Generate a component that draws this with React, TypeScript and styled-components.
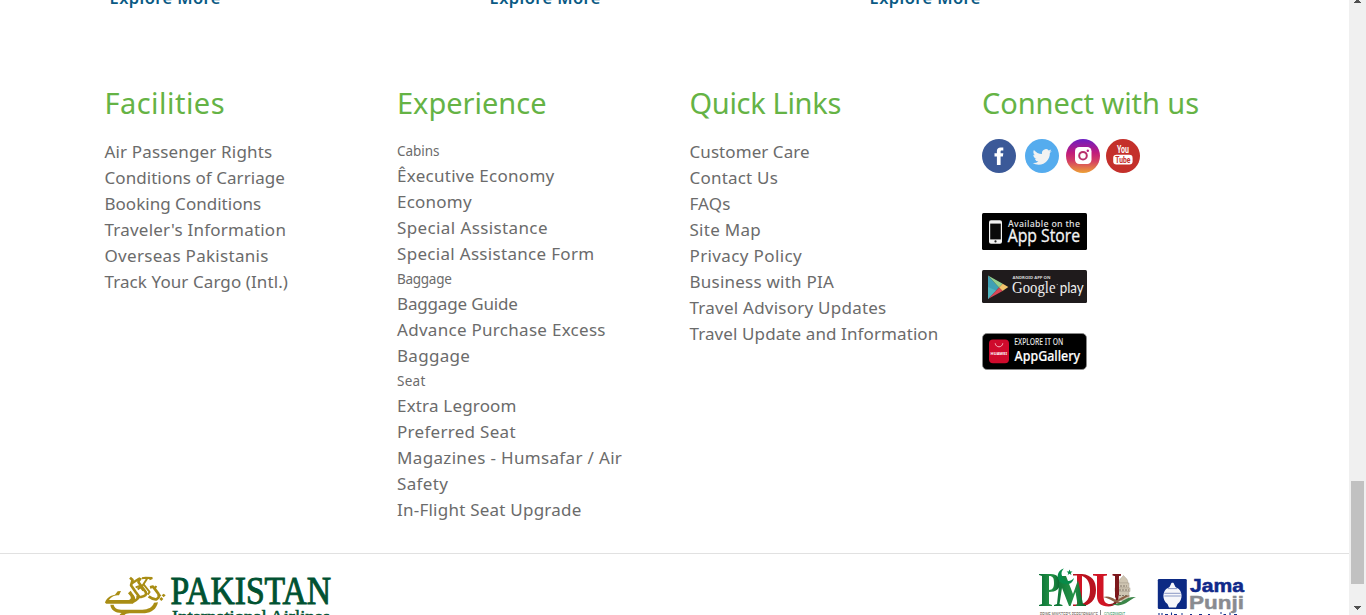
import React from "react";
import styled, { createGlobalStyle } from "styled-components";

const GlobalStyle = createGlobalStyle`
  *, *::before, *::after { box-sizing: border-box; }
  html, body { margin: 0; padding: 0; overflow: hidden; background: #fff; }
  body { font-family: "Noto Sans", "Open Sans", sans-serif; color: #6b6b6b; }
  svg { display: block; }
  ul { list-style: none; margin: 0; padding: 0; }
`;

const Window = styled.div`
  display: flex;
  width: 1366px;
  height: 615px;
  overflow: hidden;
`;

const Page = styled.div`
  flex: 1;
  min-width: 0;
  height: 100%;
  overflow: hidden;
`;

const Offers = styled.div`
  display: flex;
  height: 84px;
  padding-left: 109.5px;
`;

const ExploreLink = styled.a`
  width: 380px;
  margin-top: -14px;
  font-size: 16.5px;
  line-height: 24px;
  font-weight: 600;
  letter-spacing: 0.42px;
  color: #0a5a84;
`;

const FooterGrid = styled.div`
  display: grid;
  grid-template-columns: repeat(4, 292.5px);
  height: 469px;
  padding-left: 89.5px;
`;

const Column = styled.section`
  padding: 0 15px;
`;

const Heading = styled.h3<{ $track?: number }>`
  margin: 0;
  height: 55px;
  font-size: 29px;
  line-height: 38px;
  font-weight: 400;
  white-space: nowrap;
  letter-spacing: ${(p) => p.$track ?? 0}px;
  color: #65b345;
`;

const LinkItem = styled.li<{ $track: number }>`
  font-size: 17px;
  line-height: 26px;
  letter-spacing: ${(p) => p.$track}px;
`;

const GroupLabel = styled.li<{ $track: number }>`
  font-size: 13.5px;
  line-height: 24px;
  letter-spacing: ${(p) => p.$track}px;
`;

const Social = styled.div`
  display: flex;
  height: 74px;
`;

const SocialIcon = styled.a<{ $gap: number }>`
  width: 34px;
  height: 34px;
  margin-right: ${(p) => p.$gap}px;
`;

const Badge = styled.a<{ $height: number; $after: number }>`
  display: block;
  width: 105px;
  height: ${(p) => p.$height}px;
  margin-bottom: ${(p) => p.$after}px;
`;

const Bottom = styled.div`
  display: flex;
  height: 62px;
  border-top: 1px solid #e1e1e1;
  padding-left: 100px;
  overflow: hidden;
`;

const PiaLogo = styled.div`
  width: 935px;
`;

const PmduLogo = styled.div`
  width: 120px;
`;

const Scrollbar = styled.div`
  display: flex;
  flex-direction: column;
  align-items: center;
  justify-content: space-between;
  width: 17px;
  height: 100%;
  background: #f0f0f0;
`;

const Thumb = styled.div`
  width: 13px;
  height: 103px;
  margin: 478px 0 auto 0;
  background: #c1c1c1;
`;

type Entry = { text: string; track: number; label?: boolean };

const facilities: Entry[] = [
  { text: "Air Passenger Rights", track: 0.16 },
  { text: "Conditions of Carriage", track: 0.06 },
  { text: "Booking Conditions", track: 0.02 },
  { text: "Traveler's Information", track: 0.22 },
  { text: "Overseas Pakistanis", track: 0.3 },
  { text: "Track Your Cargo (Intl.)", track: 0.09 },
];

const experience: Entry[] = [
  { text: "Cabins", track: -0.03, label: true },
  { text: "Êxecutive Economy", track: 0.28 },
  { text: "Economy", track: 0.22 },
  { text: "Special Assistance", track: 0.39 },
  { text: "Special Assistance Form", track: 0.31 },
  { text: "Baggage", track: -0.28, label: true },
  { text: "Baggage Guide", track: -0.16 },
  { text: "Advance Purchase Excess Baggage", track: 0.29 },
  { text: "Seat", track: 0.26, label: true },
  { text: "Extra Legroom", track: 0.18 },
  { text: "Preferred Seat", track: 0.29 },
  { text: "Magazines - Humsafar / Air Safety", track: 0.34 },
  { text: "In-Flight Seat Upgrade", track: 0.23 },
];

const quickLinks: Entry[] = [
  { text: "Customer Care", track: 0.07 },
  { text: "Contact Us", track: 0.2 },
  { text: "FAQs", track: 0.14 },
  { text: "Site Map", track: 0.28 },
  { text: "Privacy Policy", track: 0.37 },
  { text: "Business with PIA", track: 0.23 },
  { text: "Travel Advisory Updates", track: 0.24 },
  { text: "Travel Update and Information", track: 0.1 },
];

const LinkList = ({ items }: { items: Entry[] }) => (
  <ul>
    {items.map((item) =>
      item.label ? (
        <GroupLabel key={item.text + "-label"} $track={item.track}>{item.text}</GroupLabel>
      ) : (
        <LinkItem key={item.text} $track={item.track}>{item.text}</LinkItem>
      )
    )}
  </ul>
);

const Facebook = () => (
  <svg width="34" height="34" viewBox="0 0 34 34">
    <circle cx="17" cy="17" r="17" fill="#3b5998" />
    <path fill="#fff" d="M14.9 26V17.6H12.5V14.2H14.9V12C14.9 9.6 16.3 8.4 18.6 8.4H21.3V11.6H19.7C18.9 11.6 18.6 12 18.6 12.7V14.2H21.3L20.9 17.6H18.6V26Z" />
  </svg>
);

const Twitter = () => (
  <svg width="34" height="34" viewBox="0 0 34 34">
    <circle cx="17" cy="17" r="17" fill="#55acee" />
    <path
      fill="#f1f2f2"
      transform="translate(7.6 8.4) scale(0.8)"
      d="M23.95 4.57a10 10 0 0 1-2.82.77 4.96 4.96 0 0 0 2.16-2.72c-.95.55-2 .95-3.13 1.18a4.92 4.92 0 0 0-8.38 4.48C7.69 8.1 4.07 6.13 1.64 3.16a4.82 4.82 0 0 0-.67 2.48c0 1.7.87 3.21 2.19 4.1a4.9 4.9 0 0 1-2.23-.62v.06a4.92 4.92 0 0 0 3.95 4.83 5 5 0 0 1-2.21.08 4.94 4.94 0 0 0 4.6 3.42A9.87 9.87 0 0 1 0 19.54a13.99 13.99 0 0 0 7.55 2.21c9.05 0 14-7.5 14-13.99 0-.21 0-.42-.02-.63a9.94 9.94 0 0 0 2.46-2.55z"
    />
  </svg>
);

const Instagram = () => (
  <svg width="34" height="34" viewBox="0 0 34 34">
    <defs>
      <linearGradient id="insta" x1="0" y1="0" x2="0" y2="1">
        <stop offset="0" stopColor="#6b1fc4" />
        <stop offset="0.4" stopColor="#c01b7c" />
        <stop offset="0.65" stopColor="#d43f63" />
        <stop offset="1" stopColor="#eda136" />
      </linearGradient>
    </defs>
    <circle cx="17" cy="17" r="17" fill="url(#insta)" />
    <rect x="9" y="8" width="16.5" height="17" rx="4.2" fill="#fff" />
    <circle cx="17" cy="16.7" r="3.8" fill="none" stroke="#b8306c" strokeWidth="2" />
    <circle cx="21.8" cy="11.8" r="1.2" fill="#b81d7c" />
  </svg>
);

const Youtube = () => (
  <svg width="34" height="34" viewBox="0 0 34 34">
    <circle cx="17" cy="17" r="17" fill="#c4302b" />
    <text x="11" y="13.8" fontFamily="Roboto, sans-serif" fontWeight="700" fontSize="10" fill="#fff" textLength="12" lengthAdjust="spacingAndGlyphs">You</text>
    <rect x="7.2" y="15.8" width="19.4" height="9.6" rx="3.2" fill="#fff" />
    <text x="9.3" y="23.6" fontFamily="Roboto, sans-serif" fontWeight="700" fontSize="8.4" fill="#c4302b" textLength="15.2" lengthAdjust="spacingAndGlyphs">Tube</text>
  </svg>
);

const AppStore = () => (
  <svg width="105" height="37" viewBox="0 0 105 37">
    <rect width="105" height="37" rx="1.5" fill="#000" />
    <rect x="7" y="7.3" width="13" height="23.4" rx="2" fill="#f2f2f2" />
    <rect x="8.2" y="10.6" width="10.6" height="15.8" fill="#0a0a0a" />
    <circle cx="13.5" cy="28.4" r="1.1" fill="#222" />
    <text x="26" y="14.2" fontFamily="Noto Sans, sans-serif" fontWeight="500" fontSize="8.8" fill="#e4e4e4" textLength="72" lengthAdjust="spacing">Available on the</text>
    <text x="25.7" y="29.4" fontFamily="Open Sans, sans-serif" fontWeight="500" fontSize="18" fill="#f4f4f4" stroke="#f4f4f4" strokeWidth="0.3" textLength="72.5" lengthAdjust="spacingAndGlyphs">App Store</text>
  </svg>
);

const GooglePlay = () => (
  <svg width="105" height="33" viewBox="0 0 105 33">
    <rect width="105" height="33" rx="1.5" fill="#1f1b1c" />
    <path d="M6 5.5V29L17 17.6Z" fill="#3fa0b5" />
    <path d="M6 5.5L17 17.6L20.7 13.8Z" fill="#94cf8e" />
    <path d="M20.7 13.8L26.3 17L20.5 21L17 17.6Z" fill="#f2c46c" />
    <path d="M6 29L17 17.6L20.6 21Z" fill="#d94756" />
    <path d="M6 17V29L14 20.5Z" fill="#4fb6c0" />
    <text x="30.5" y="9" fontFamily="Noto Sans, sans-serif" fontWeight="700" fontSize="4" fill="#d8d8d8" textLength="38" lengthAdjust="spacingAndGlyphs">ANDROID APP ON</text>
    <text x="30" y="22.6" fontFamily="Liberation Serif, serif" fontSize="16.5" fill="#efefef" textLength="43.5" lengthAdjust="spacingAndGlyphs">Google</text>
    <circle cx="75.2" cy="14.5" r="0.6" fill="#aaa" />
    <text x="77.7" y="22.6" fontFamily="Lato, sans-serif" fontSize="16" fill="#efefef" textLength="24" lengthAdjust="spacingAndGlyphs">play</text>
  </svg>
);

const AppGallery = () => (
  <svg width="105" height="37" viewBox="0 0 105 37">
    <rect x="0.5" y="0.5" width="104" height="36" rx="4.5" fill="#000" stroke="#8c8c8c" strokeWidth="0.8" />
    <rect x="7" y="6.4" width="20" height="23.8" rx="4" fill="#cf0a2c" />
    <path d="M13.2 10.3C13.8 15 20.2 15 20.8 10.3" fill="none" stroke="#f6c6ce" strokeWidth="0.9" />
    <text x="8.6" y="21.6" fontFamily="Noto Sans, sans-serif" fontWeight="700" fontSize="4.2" fill="#fff" textLength="16.4" lengthAdjust="spacingAndGlyphs">HUAWEI</text>
    <text x="32.3" y="12.3" fontFamily="Noto Sans, sans-serif" fontWeight="500" fontSize="8.2" fill="#e8e8e8" textLength="49" lengthAdjust="spacingAndGlyphs">EXPLORE IT ON</text>
    <text x="32.6" y="28" fontFamily="Noto Sans, sans-serif" fontWeight="500" fontSize="15" fill="#fff" stroke="#fff" strokeWidth="0.2" textLength="65.5" lengthAdjust="spacingAndGlyphs">AppGallery</text>
  </svg>
);

const Pia = () => (
  <svg width="240" height="61" viewBox="0 0 240 61">
    <g transform="translate(-5 6) scale(0.3333)" fill="#a98d14">
      <path d="M30 128C34 114 44 107 60 104L68 94L78 93L72 106C58 106 50 110 42 120H102C110 118 108 110 104 106L99 100L107 92L114 103C122 112 124 120 114 131H34Z" />
      <path d="M46 134H56C58 145 68 149 84 149H142C160 148 172 142 177 128L189 127C184 148 170 158 150 160H104C92 161 86 164 86 172H72C73 164 76 161 80 159C60 158 48 150 46 134Z" />
      <g fill="none" stroke="#a98d14" strokeLinejoin="bevel">
        <path d="M105 53L113 60L108 76L122 96L131 108Q132 117 114 125" strokeWidth="8" />
        <path d="M111 70L132 56L139 58" strokeWidth="7" />
        <path d="M136 54L130 66L152 96Q158 107 138 111H124" strokeWidth="8" />
        <path d="M141 55L152 53L172 54L163 58" strokeWidth="6" />
        <path d="M156 56L142 78L128 88M122 82L134 78L145 92" strokeWidth="6" />
        <path d="M165 82L174 80L190 101Q196 110 184 118Q174 119 161 109" strokeWidth="8" />
        <path d="M184 78L178 88M145 72L164 96L158 104" strokeWidth="6" />
      </g>
      <path d="M193 101l6 5-6 6-6-6zM206 101l6 5-6 6-6-6zM199 111l6 6-6 6-6-6z" />
    </g>
    <text x="70.5" y="50.3" fontFamily="Liberation Serif, serif" fontSize="39" fill="#005232" stroke="#005232" strokeWidth="1" textLength="160.5" lengthAdjust="spacingAndGlyphs">PAKISTAN</text>
    <text x="72" y="67.5" fontFamily="Liberation Serif, serif" fontSize="17.5" fill="#005232" stroke="#005232" strokeWidth="0.5" textLength="158" lengthAdjust="spacingAndGlyphs">International Airlines</text>
  </svg>
);

const Pmdu = () => (
  <svg width="105" height="61" viewBox="1035 554 105 61">
    <defs>
      <linearGradient id="green" x1="0" x2="1">
        <stop offset="0" stopColor="#0a7034" />
        <stop offset="0.6" stopColor="#249347" />
        <stop offset="1" stopColor="#08632d" />
      </linearGradient>
      <linearGradient id="uRed" x1="0" x2="1">
        <stop offset="0.5" stopColor="#d01424" />
        <stop offset="0.8" stopColor="#751419" />
      </linearGradient>
    </defs>
    <g fill="#cfc5b2" stroke="#a99f8e" strokeWidth="0.5">
      <path d="M1119 583C1119 579 1121.5 578 1123.5 575.5C1125.5 578 1128 579 1128 583Z" />
      <rect x="1118" y="583" width="11" height="5" />
      <rect x="1115" y="588" width="15" height="3.5" />
      <rect x="1117" y="591.5" width="12" height="9" />
    </g>
    <path d="M1120 586H1127M1119 590H1129M1119 595.5H1128" stroke="#81776a" strokeWidth="1" strokeDasharray="2 1" />
    {/* D and U monogram strokes */}
    <path d="M1073 574H1082C1092 575 1096 581 1096 590C1096 600 1090 606 1081 606H1073V604.5H1080C1087 603 1090 598 1090 590C1090 581 1086 576.5 1080 575.5H1073Z" fill="#b8131f" />
    <path d="M1077 575H1082V605H1077Z" fill="#d01424" />
    <path d="M1093 574H1107V575.5L1103.5 576V596C1103.5 602 1106 604 1110 604C1114 604 1116 601 1116 596V576L1112.5 575.5V574H1121V575.5L1118.5 576V596C1118.5 603 1115 606.5 1108.5 606.5C1101 606.5 1097 603 1097 596V576L1093 575.5Z" fill="url(#uRed)" />
    <path d="M1113.5 574H1121V575.5L1119 576V595L1115 598V576L1113.5 575.5Z" fill="#7b171b" />
    {/* P and M monogram strokes */}
    <path d="M1039 574H1051C1057 574 1060 578 1060 583C1060 589 1056 592 1049 592V604L1052 605V606H1039V605L1042 604V576L1039 575Z M1049 576V590C1053 590 1054 587 1054 583C1054 578 1053 576 1049 576Z" fill="url(#green)" fillRule="evenodd" />
    <path d="M1060 576H1066L1073 594L1078 580L1083 604L1086 605V606H1076V605L1077.5 604L1075.5 592L1070.5 606H1069L1062 588L1059.5 604L1062.5 605V606H1054V605L1057 604Z" fill="url(#green)" />
    <path d="M1064 568.5C1055 571 1056 583 1065 584C1070 585 1073 582 1074 578C1071 581.5 1067 582 1064 579C1060.5 575 1061 571 1064 568.5Z" fill="#078b49" />
    <path d="M1069.5 569.5l.9 2 2.1.1-1.7 1.3.6 2.1-1.9-1.2-1.8 1.2.6-2.1-1.7-1.3 2.1-.1z" fill="#078b49" />
    <path d="M1103 597C1113 594 1117 604 1125 602C1118 607 1113 599 1103 597Z" fill="#8c6046" />
    <path d="M1112 604C1121 605 1125 596 1136 597C1130 599 1123 609 1112 604Z" fill="#3b8548" />
    <path d="M1114 602C1121 602 1125 597 1130 596C1124 594 1119 600 1114 602Z" fill="#8c6046" />
    <text x="1040" y="616" fontFamily="Liberation Sans, sans-serif" fontSize="4.5" fill="#594b43" textLength="58" lengthAdjust="spacingAndGlyphs">PRIME MINISTER'S PERFORMANCE</text>
    <path d="M1100.5 610V615" stroke="#555" strokeWidth="0.7" />
    <text x="1104" y="616" fontFamily="Liberation Sans, sans-serif" fontSize="4.5" fill="#258b50" textLength="21" lengthAdjust="spacingAndGlyphs">GOVERNMENT</text>
  </svg>
);

const JamaPunji = () => (
  <svg width="95" height="61" viewBox="1155 554 95 61">
    <rect x="1157.8" y="579" width="29" height="30" rx="1.3" fill="#0c2a84" />
    <path d="M1171 584C1171 582.4 1174 582.4 1174 584L1175.5 587L1177 588C1182.5 590 1183.5 600 1177.5 604L1176 607.5H1169L1167.5 604C1161.500 600 1162.500 590 1168 588L1169.500 587Z" fill="#f6f7fa" />
    <path d="M1168 588.600H1177M1164.300 593.300H1180.700M1164.300 596H1180.700" stroke="#5c70ad" strokeWidth="0.7" />
    <text x="1190" y="592.3" fontFamily="Liberation Sans, sans-serif" fontWeight="700" fontSize="18" fill="#10298a" stroke="#10298a" strokeWidth="0.5" textLength="54" lengthAdjust="spacingAndGlyphs">Jama</text>
    <text x="1189" y="609" fontFamily="Liberation Sans, sans-serif" fontWeight="700" fontSize="17.5" fill="#898b90" stroke="#898b90" strokeWidth="0.4" textLength="55" lengthAdjust="spacingAndGlyphs">Punji</text>
    <path d="M1159 613V616M1162 613V616M1165 614.5H1168M1171.500 612.500V616M1174 614.500H1177M1181 614H1183M1190 614.5H1192M1199 614.500H1202M1208 614.5H1210M1220 613H1222M1223.500 614.5H1226M1230 612.5V616M1234 614.500H1237" stroke="#12308a" strokeWidth="1.1" fill="none" />
  </svg>
);

export default function App() {
  return (
    <Window>
      <GlobalStyle />
      <Page>
        <Offers>
          <ExploreLink>Explore More</ExploreLink>
          <ExploreLink>Explore More</ExploreLink>
          <ExploreLink>Explore More</ExploreLink>
        </Offers>
        <FooterGrid>
          <Column>
            <Heading $track={0.46}>Facilities</Heading>
            <LinkList items={facilities} />
          </Column>
          <Column>
            <Heading $track={-0.02}>Experience</Heading>
            <LinkList items={experience} />
          </Column>
          <Column>
            <Heading $track={-0.32}>Quick Links</Heading>
            <LinkList items={quickLinks} />
          </Column>
          <Column>
            <Heading $track={-0.07}>Connect with us</Heading>
            <Social>
              <SocialIcon $gap={9}><Facebook /></SocialIcon>
              <SocialIcon $gap={7}><Twitter /></SocialIcon>
              <SocialIcon $gap={6}><Instagram /></SocialIcon>
              <SocialIcon $gap={0}><Youtube /></SocialIcon>
            </Social>
            <Badge $height={37} $after={20}><AppStore /></Badge>
            <Badge $height={33} $after={30}><GooglePlay /></Badge>
            <Badge $height={37} $after={0}><AppGallery /></Badge>
          </Column>
        </FooterGrid>
        <Bottom>
          <PiaLogo><Pia /></PiaLogo>
          <PmduLogo><Pmdu /></PmduLogo>
          <JamaPunji />
        </Bottom>
      </Page>
      <Scrollbar>
        <svg width="17" height="3" viewBox="0 0 17 3"><path d="M7 0H10V1H11V2H12V3H5V2H6V1H7Z" fill="#505050" /></svg>
        <Thumb />
        <svg width="17" height="10" viewBox="0 0 17 10"><path d="M5 1H12V2H11V3H10V4H9V5H8V4H7V3H6V2H5Z" fill="#505050" /></svg>
      </Scrollbar>
    </Window>
  );
}
